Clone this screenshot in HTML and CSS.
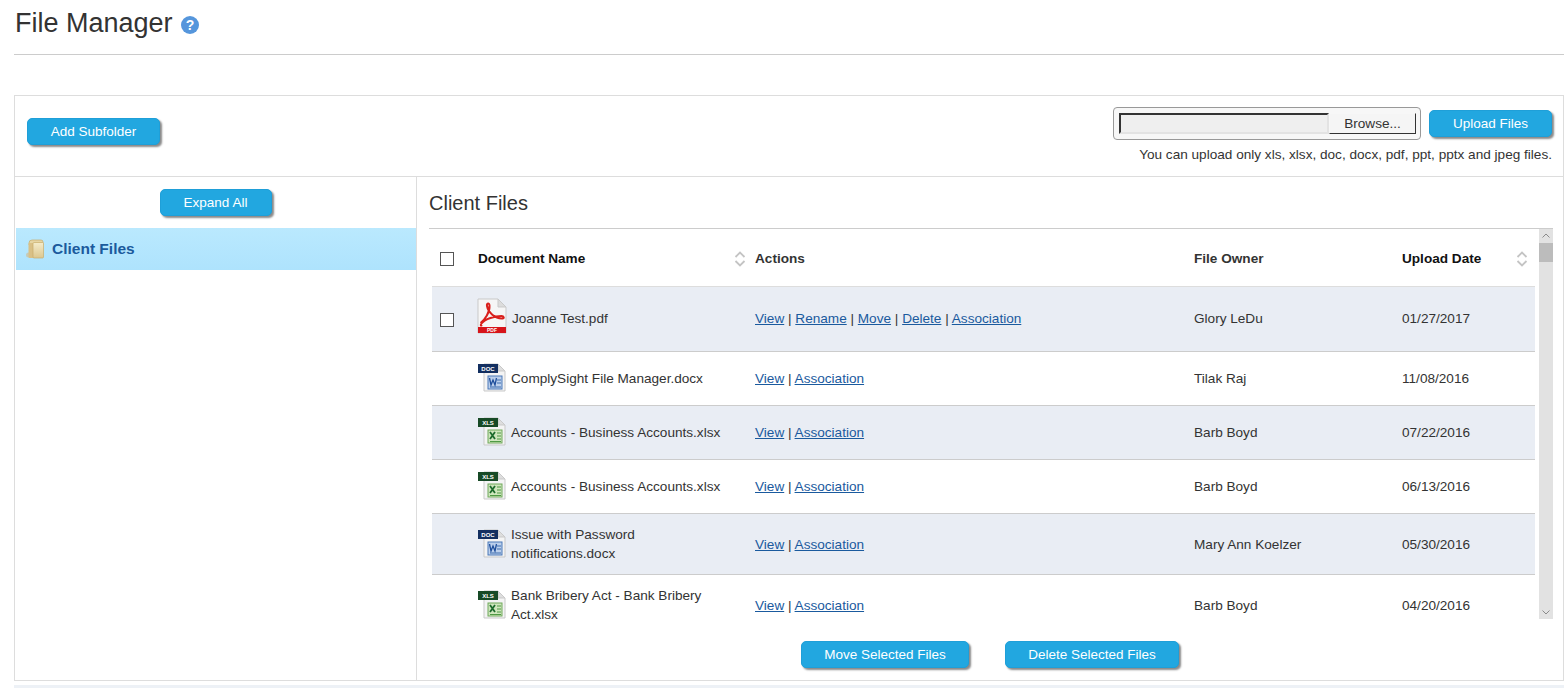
FILE: index.html
```html
<!DOCTYPE html>
<html lang="en">
  <head>
    <meta charset="UTF-8" />
    <title>File Manager</title>
    <link rel="stylesheet" href="styles.css" />
  </head>
  <body>
    <!-- ICONS ============ -->
    <svg class="defs" xmlns="http://www.w3.org/2000/svg">
      <defs>
        <linearGradient id="folder-front" x1="0" y1="0" x2="0" y2="1">
          <stop offset="0" stop-color="#f5eccb" />
          <stop offset="1" stop-color="#dcc78f" />
        </linearGradient>
        <symbol id="icon-pdf" viewBox="0 0 30 36">
          <path d="M1 1H21L29 9V35H1Z" fill="#f6f6f6" stroke="#c9c9c9" />
          <path d="M21 1V9H29Z" fill="#dcdcdc" stroke="#c9c9c9" />
          <path d="M3.500 25C8 22 13 14 12.500 7.500C12.300 4.500 9.500 5 10 8C11 14 18 21 25.500 20.500C27.500 20.300 27 18 24.500 18C18 18 8 21 4.500 25.500C3 27.500 4 28 5 27" fill="none" stroke="#d9201c" stroke-width="2" />
          <rect x="1" y="29" width="28" height="6" fill="#d7141a" />
          <text x="15" y="34" class="pdf-tag">PDF</text>
        </symbol>
        <symbol id="icon-doc" viewBox="0 0 28 29">
          <path d="M6 1H20L27 8V28H6Z" fill="#f4f4f4" stroke="#c9c9c9" />
          <path d="M20 1V8H27Z" fill="#dedede" stroke="#c9c9c9" />
          <rect x="0" y="1" width="20" height="9" fill="#132f60" />
          <text x="10" y="8" class="file-tag">DOC</text>
          <rect x="10" y="13" width="14" height="13" fill="#bcd0ec" stroke="#4a78b8" />
          <path d="M11.500 15L13 22L15 17L17 22L18.500 15" fill="none" stroke="#1f4f9c" stroke-width="1.300" />
          <path d="M19 17H23M19 20H23M12 24H23" stroke="#3d6cae" />
        </symbol>
        <symbol id="icon-xls" viewBox="0 0 28 29">
          <path d="M6 1H20L27 8V28H6Z" fill="#f4f4f4" stroke="#c9c9c9" />
          <path d="M20 1V8H27Z" fill="#dedede" stroke="#c9c9c9" />
          <rect x="0" y="1" width="20" height="9" fill="#174a26" />
          <text x="10" y="8" class="file-tag">XLS</text>
          <rect x="10" y="13" width="14" height="13" fill="#cfe6bd" stroke="#6fa85a" />
          <path d="M12 15L17 22M17 15L12 22" stroke="#1d6b2c" stroke-width="1.800" />
          <path d="M19 16H23M19 19H23M19 22H23M12 24.500H23" stroke="#4f9a45" />
        </symbol>
      </defs>
    </svg>

    <!-- HEADER ============ -->
    <header class="page-header">
      <h1>File Manager</h1>
      <svg class="help" viewBox="0 0 18 18" xmlns="http://www.w3.org/2000/svg">
        <circle cx="9" cy="9" r="9" fill="#5596dc" />
        <text x="9" y="14" class="help-mark">?</text>
      </svg>
    </header>

    <!-- PANEL ============ -->
    <main class="panel">
      <div class="toolbar">
        <button class="btn btn-subfolder">Add Subfolder</button>
        <div class="upload">
          <div class="upload-row">
            <div class="file-box">
              <span class="file-field"></span>
              <span class="file-browse">Browse...</span>
            </div>
            <button class="btn btn-upload">Upload Files</button>
          </div>
          <p class="upload-note">
            You can upload only xls, xlsx, doc, docx, pdf, ppt, pptx and jpeg files.
          </p>
        </div>
      </div>

      <div class="columns">
        <!-- TREE ============ -->
        <aside class="tree">
          <button class="btn btn-expand">Expand All</button>
          <div class="tree-item">
            <svg class="folder" viewBox="0 0 18 20" xmlns="http://www.w3.org/2000/svg">
              <ellipse cx="2.500" cy="16" rx="2.500" ry="2.500" fill="#c9c3a6" opacity="0.8" />
              <path d="M3 4Q3 1 6 1H15Q17 1 17 3V6H3Z" fill="#e6d5a3" stroke="#c8ad6c" stroke-width="0.700" />
              <rect x="2.500" y="4" width="9" height="15" rx="1" fill="#d9c086" />
              <rect x="7" y="3.500" width="10.500" height="15.500" rx="1" fill="url(#folder-front)" stroke="#c8ad6c" stroke-width="0.700" />
            </svg>
            <span>Client Files</span>
          </div>
        </aside>

        <!-- FILES ============ -->
        <section class="files">
          <h2>Client Files</h2>
          <div class="table-frame">
            <div class="table-clip">
              <table class="file-table">
                <colgroup>
                  <col class="col-check" />
                  <col class="col-name" />
                  <col class="col-actions" />
                  <col class="col-owner" />
                  <col class="col-date" />
                </colgroup>
                <thead>
                  <tr>
                    <th><span class="check"></span></th>
                    <th>
                      <div class="th-sort">
                        Document Name
                        <svg class="sort" viewBox="0 0 12 16" xmlns="http://www.w3.org/2000/svg"><path d="M1.500 6L6 1.500L10.500 6M1.500 10L6 14.500L10.500 10" /></svg>
                      </div>
                    </th>
                    <th>Actions</th>
                    <th>File Owner</th>
                    <th>
                      <div class="th-sort th-sort-last">
                        Upload Date
                        <svg class="sort" viewBox="0 0 12 16" xmlns="http://www.w3.org/2000/svg"><path d="M1.500 6L6 1.500L10.500 6M1.500 10L6 14.500L10.500 10" /></svg>
                      </div>
                    </th>
                  </tr>
                </thead>
                <tbody>
                  <tr class="row-first shaded">
                    <td><span class="check"></span></td>
                    <td>
                      <div class="doc">
                        <svg class="icon-pdf"><use href="#icon-pdf" /></svg>
                        <span>Joanne Test.pdf</span>
                      </div>
                    </td>
                    <td><a href="#">View</a> | <a href="#">Rename</a> | <a href="#">Move</a> | <a href="#">Delete</a> | <a href="#">Association</a></td>
                    <td>Glory LeDu</td>
                    <td>01/27/2017</td>
                  </tr>
                  <tr>
                    <td></td>
                    <td>
                      <div class="doc">
                        <svg class="icon-file"><use href="#icon-doc" /></svg>
                        <span>ComplySight File Manager.docx</span>
                      </div>
                    </td>
                    <td><a href="#">View</a> | <a href="#">Association</a></td>
                    <td>Tilak Raj</td>
                    <td>11/08/2016</td>
                  </tr>
                  <tr class="shaded">
                    <td></td>
                    <td>
                      <div class="doc">
                        <svg class="icon-file"><use href="#icon-xls" /></svg>
                        <span>Accounts - Business Accounts.xlsx</span>
                      </div>
                    </td>
                    <td><a href="#">View</a> | <a href="#">Association</a></td>
                    <td>Barb Boyd</td>
                    <td>07/22/2016</td>
                  </tr>
                  <tr>
                    <td></td>
                    <td>
                      <div class="doc">
                        <svg class="icon-file"><use href="#icon-xls" /></svg>
                        <span>Accounts - Business Accounts.xlsx</span>
                      </div>
                    </td>
                    <td><a href="#">View</a> | <a href="#">Association</a></td>
                    <td>Barb Boyd</td>
                    <td>06/13/2016</td>
                  </tr>
                  <tr class="row-tall shaded">
                    <td></td>
                    <td>
                      <div class="doc">
                        <svg class="icon-file"><use href="#icon-doc" /></svg>
                        <span>Issue with Password notifications.docx</span>
                      </div>
                    </td>
                    <td><a href="#">View</a> | <a href="#">Association</a></td>
                    <td>Mary Ann Koelzer</td>
                    <td>05/30/2016</td>
                  </tr>
                  <tr class="row-tall">
                    <td></td>
                    <td>
                      <div class="doc">
                        <svg class="icon-file"><use href="#icon-xls" /></svg>
                        <span>Bank Bribery Act - Bank Bribery Act.xlsx</span>
                      </div>
                    </td>
                    <td><a href="#">View</a> | <a href="#">Association</a></td>
                    <td>Barb Boyd</td>
                    <td>04/20/2016</td>
                  </tr>
                </tbody>
              </table>
            </div>
            <div class="scrollbar">
              <svg class="scroll-arrow" viewBox="0 0 14 14" xmlns="http://www.w3.org/2000/svg"><path d="M3.500 8.500L7 5L10.500 8.500" /></svg>
              <div class="scroll-thumb"></div>
              <svg class="scroll-arrow scroll-down" viewBox="0 0 14 14" xmlns="http://www.w3.org/2000/svg"><path d="M3.500 5.500L7 9L10.500 5.500" /></svg>
            </div>
          </div>
          <div class="bulk">
            <button class="btn btn-move">Move Selected Files</button>
            <button class="btn btn-delete">Delete Selected Files</button>
          </div>
        </section>
      </div>
    </main>
    <div class="page-strip"></div>
  </body>
</html>
```

FILE: styles.css
```css
/* GLOBAL ============ */

* {
  margin: 0;
  padding: 0;
  box-sizing: border-box;
}

html,
body {
  height: 688px;
  overflow: hidden;
}

body {
  background: #fff;
  color: #333;
  font-family: 'Liberation Sans', Arial, sans-serif;
  font-size: 13.6px;
  padding-left: 14px;
  padding-right: 4px;
}

.defs {
  position: absolute;
  width: 0;
  height: 0;
}

a {
  color: #1a5a9e;
}

/* BUTTONS ============ */

.btn {
  display: block;
  height: 27px;
  padding-bottom: 1px;
  border: 1px solid #1f9fd8;
  border-radius: 5px;
  background: #22a7e0;
  box-shadow: 2px 2px 2px #8a8a8a;
  color: #fff;
  font-family: inherit;
  font-size: 13.5px;
}

.btn-subfolder {
  width: 133px;
}

.btn-upload {
  width: 123px;
}

.btn-expand {
  width: 112px;
  margin: 0 auto;
}

.btn-move {
  width: 168px;
}

.btn-delete {
  width: 174px;
}

/* HEADER ============ */

.page-header {
  display: flex;
  align-items: center;
  gap: 8px;
  height: 55px;
  padding: 7px 0 15px 1px;
  border-bottom: 1px solid #ccc;
}

.page-header h1 {
  font-size: 27px;
  font-weight: 400;
  line-height: 32px;
}

.help {
  width: 18px;
  height: 18px;
  margin-top: 3px;
}

.help-mark {
  fill: #fff;
  font-size: 14px;
  font-weight: 700;
  text-anchor: middle;
}

/* PANEL ============ */

.panel {
  display: flex;
  flex-direction: column;
  height: 586px;
  margin-top: 40px;
  border: 1px solid #ddd;
}

.toolbar {
  display: flex;
  justify-content: space-between;
  height: 81px;
  padding: 11px 11px 0 12px;
  border-bottom: 1px solid #ddd;
}

.btn-subfolder {
  margin-top: 11px;
}

.upload-row {
  display: flex;
  align-items: flex-start;
  gap: 8px;
}

.file-box {
  display: flex;
  width: 308px;
  height: 33px;
  padding: 5px 4px 5px 5px;
  border: 1px solid #999;
  border-radius: 4px;
  background: #f7f7f7;
}

.file-field {
  width: 210px;
  height: 21px;
  border: 2px solid;
  border-color: #333 #e3e3e3 #e3e3e3 #333;
  background: #efefef;
}

.file-browse {
  width: 87px;
  height: 21px;
  border: 1px solid;
  border-color: #f7f7f7 #333 #333 #f7f7f7;
  background: #f5f5f5;
  line-height: 20px;
  text-align: center;
}

.btn-upload {
  margin-top: 3px;
}

.upload-note {
  margin-top: 7px;
  line-height: 16px;
  text-align: right;
}

.columns {
  display: flex;
  flex: 1;
}

/* TREE ============ */

.tree {
  width: 402px;
  padding-top: 12px;
  border-right: 1px solid #ddd;
}

.tree-item {
  display: flex;
  align-items: center;
  gap: 8px;
  height: 42px;
  margin: 12px 0 0 1px;
  padding-left: 10px;
  background: linear-gradient(#bae9fe, #aee3fd);
  color: #1b5a9c;
  font-size: 15.5px;
  font-weight: 700;
}

.folder {
  width: 18px;
  height: 20px;
}

/* FILES ============ */

.files {
  flex: 1;
  padding: 0 10px 0 12px;
}

.files h2 {
  height: 52px;
  border-bottom: 1px solid #ccc;
  font-size: 20px;
  font-weight: 400;
  line-height: 52px;
}

.table-frame {
  display: flex;
  height: 390px;
}

.table-clip {
  flex: 1;
  height: 390px;
  overflow: hidden;
  padding: 0 3px;
}

.file-table {
  width: 1103px;
  border-collapse: collapse;
  table-layout: fixed;
}

.col-check {
  width: 46px;
}

.col-name {
  width: 277px;
}

.col-actions {
  width: 439px;
}

.col-owner {
  width: 208px;
}

.file-table th {
  height: 57px;
  padding-top: 3px;
  color: #111;
  font-weight: 700;
  text-align: left;
}

.file-table th:nth-child(3),
.file-table th:nth-child(4) {
  color: #333;
}

.file-table td {
  height: 54px;
  border-bottom: 1px solid #ccc;
}

.file-table th:first-child,
.file-table td:first-child {
  padding-left: 8px;
}

.file-table .row-first td {
  height: 65px;
  border-top: 1px solid #ddd;
}

.file-table .row-tall td {
  height: 61px;
}

.file-table .row-tall td:not(:nth-child(2)) {
  padding-top: 2px;
}

.shaded {
  background: #e9edf4;
}

.check {
  display: block;
  width: 14px;
  height: 14px;
  border: 1px solid #555;
  background: #fff;
}

.row-first .check {
  margin-top: 2px;
}

.th-sort {
  display: flex;
  align-items: center;
  justify-content: space-between;
  padding-right: 9px;
}

.th-sort-last {
  padding-right: 7px;
}

.sort {
  width: 12px;
  height: 16px;
}

.sort path {
  fill: none;
  stroke: #c4c4c4;
  stroke-width: 1.800;
}

.doc {
  display: flex;
  align-items: center;
}

.doc span {
  width: 215px;
  line-height: 19px;
}

.icon-pdf {
  width: 30px;
  height: 36px;
  margin: 0 5px 6px -1px;
}

.icon-file {
  width: 28px;
  height: 29px;
  margin: 0 5px 2px 0;
}

.row-tall .icon-file {
  margin-bottom: 0;
}

.pdf-tag,
.file-tag {
  fill: #fff;
  font-weight: 700;
  text-anchor: middle;
}

.pdf-tag {
  font-size: 5px;
}

.file-tag {
  font-size: 6px;
}

/* SCROLLBAR ============ */

.scrollbar {
  position: relative;
  flex: 0 0 14px;
  background: #e2e2e2;
}

.scroll-arrow {
  display: block;
  width: 14px;
  height: 14px;
}

.scroll-arrow path {
  fill: none;
  stroke: #8a8a8a;
}

.scroll-thumb {
  width: 14px;
  height: 19px;
  background: #bcbcbc;
}

.scroll-down {
  position: absolute;
  bottom: 0;
}

/* BULK ACTIONS ============ */

.bulk {
  display: flex;
  justify-content: center;
  gap: 36px;
  padding: 22px 2px 0 0;
}

.page-strip {
  height: 3px;
  margin-top: 4px;
  background: #edf1f6;
}
```
